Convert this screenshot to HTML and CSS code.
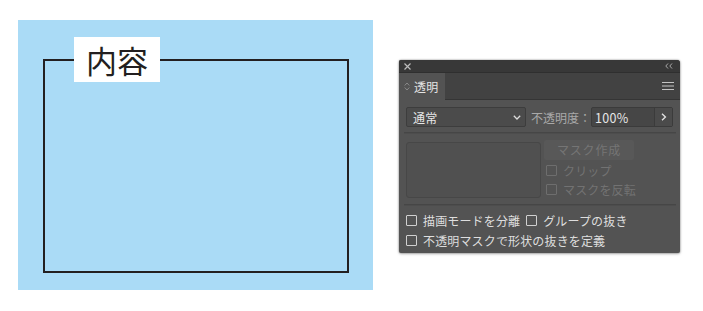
FILE: index.html
```html
<!DOCTYPE html>
<html lang="ja">
<head>
<meta charset="utf-8">
<link rel="stylesheet" href="styles.css">
</head>
<body>
<div class="page">
  <div class="canvas">
    <div class="frame"></div>
    <div class="label">内容</div>
  </div>
  <div class="panel">
    <div class="titlebar">
      <svg class="close" width="7" height="7" viewBox="0 0 7 7"><path d="M0.5 0.5L6.5 6.5M6.5 0.5L0.5 6.5" stroke="#bdbdbd" stroke-width="1.2"/></svg>
      <svg class="collapse" width="8" height="6" viewBox="0 0 8 6"><path d="M3 0.5L0.8 3L3 5.5M7 0.5L4.8 3L7 5.5" stroke="#a8a8a8" stroke-width="1" fill="none"/></svg>
    </div>
    <div class="tabrow">
      <div class="tab">
        <svg class="updown" width="6" height="9" viewBox="0 0 6 9"><path d="M0.7 3.5L3 1L5.3 3.5M0.7 5.5L3 8L5.3 5.5" stroke="#8a8a8a" stroke-width="1" fill="none"/></svg>
        <span>透明</span>
      </div>
      <svg class="menu" width="12" height="8" viewBox="0 0 12 8"><path d="M0 0.5H12M0 4H12M0 7.5H12" stroke="#c4c4c4" stroke-width="1"/></svg>
    </div>
    <div class="body">
      <div class="row1">
        <div class="select">
          <span>通常</span>
          <svg width="8" height="5" viewBox="0 0 8 5"><path d="M0.8 0.8L4 4L7.2 0.8" stroke="#dcdcdc" stroke-width="1.3" fill="none"/></svg>
        </div>
        <span class="oplabel">不透明度：</span>
        <div class="opinput">
          <span class="val">100%</span>
          <span class="arrow"><svg width="6" height="8" viewBox="0 0 6 8"><path d="M1 0.8L4.4 4L1 7.2" stroke="#e0e0e0" stroke-width="1.4" fill="none"/></svg></span>
        </div>
      </div>
      <div class="sep"></div>
      <div class="maskarea">
        <div class="thumb"></div>
        <div class="maskcol">
          <div class="maskbtn">マスク作成</div>
          <label class="check dis"><span class="box"></span>クリップ</label>
          <label class="check dis"><span class="box"></span>マスクを反転</label>
        </div>
      </div>
      <div class="sep sep2"></div>
      <div class="opts">
        <div class="optrow">
          <label class="check"><span class="box"></span>描画モードを分離</label>
          <label class="check"><span class="box"></span>グループの抜き</label>
        </div>
        <div class="optrow">
          <label class="check"><span class="box"></span>不透明マスクで形状の抜きを定義</label>
        </div>
      </div>
    </div>
  </div>
</div>
</body>
</html>
```

FILE: styles.css
```css
html, body {
  margin: 0;
  padding: 0;
  background: #ffffff;
}
body {
  font-family: "Noto Sans CJK JP", "Noto Sans", sans-serif;
  width: 703px;
  height: 311px;
  overflow: hidden;
}
.page {
  display: flex;
  align-items: flex-start;
  padding: 20px 0 0 18px;
}
.canvas {
  position: relative;
  width: 355px;
  height: 270px;
  background: #aadbf6;
  box-sizing: border-box;
  padding: 39px 0 0 25px;
}
.frame {
  width: 306px;
  height: 214px;
  box-sizing: border-box;
  border: 2px solid #231f20;
}
.label {
  position: absolute;
  left: 56px;
  top: 17px;
  width: 86px;
  height: 45px;
  background: #ffffff;
  color: #231f20;
  font-size: 31px;
  line-height: 45px;
  text-align: center;
  font-weight: 400;
}
.panel {
  margin-left: 26px;
  margin-top: 40px;
  width: 281px;
  height: 193px;
  background: #535353;
  border-radius: 2px 3px 2px 2px;
  box-shadow: 0 0 2px rgba(0,0,0,0.45), 0 1px 3px rgba(0,0,0,0.25);
  overflow: hidden;
  color: #d6d6d6;
  font-size: 12px;
  letter-spacing: 0.15px;
}
.titlebar {
  height: 12px;
  background: #383838;
  display: flex;
  align-items: center;
  justify-content: space-between;
  padding: 0 7px 0 5px;
  border-bottom: 1px solid #2f2f2f;
}
.tabrow {
  height: 26px;
  background: #424242;
  display: flex;
  align-items: stretch;
  justify-content: space-between;
  border-bottom: 1px solid #353535;
}
.tab {
  width: 46px;
  background: #535353;
  display: flex;
  align-items: center;
  gap: 4px;
  padding-left: 5px;
  box-sizing: border-box;
  color: #e4e4e4;
  font-size: 12px;
  margin-bottom: -1px;
}
.menu {
  align-self: center;
  margin-right: 6px;
}
.body {
  padding: 7px 7px 0 7px;
}
.row1 {
  display: flex;
  align-items: center;
  height: 20px;
}
.select {
  width: 120px;
  height: 20px;
  box-sizing: border-box;
  border: 1px solid #3d3d3d;
  border-radius: 2px;
  background: #4b4b4b;
  display: flex;
  align-items: center;
  justify-content: space-between;
  padding: 0 4px 0 6px;
  color: #e6e6e6;
}
.oplabel {
  margin-left: 5px;
  color: #a9a9a9;
  letter-spacing: 0;
  width: 60px;
  white-space: nowrap;
}
.opinput {
  width: 82px;
  height: 20px;
  box-sizing: border-box;
  border: 1px solid #3b3b3b;
  border-radius: 2px;
  background: #464646;
  display: flex;
  align-items: stretch;
}
.val {
  flex: 1;
  display: flex;
  align-items: center;
  padding-left: 3px;
  color: #e6e6e6;
  font-size: 12.5px;
  letter-spacing: 0.3px;
}
.arrow {
  width: 17px;
  border-left: 1px solid #3b3b3b;
  display: flex;
  align-items: center;
  justify-content: center;
  background: #4b4b4b;
}
.sep {
  height: 1px;
  background: #464646;
  margin: 5px -3px 0 -2px;
  border-bottom: 1px solid #4d4d4d;
}
.maskarea {
  display: flex;
  gap: 3px;
  margin-top: 6px;
  height: 59px;
}
.thumb {
  width: 135px;
  height: 56px;
  box-sizing: border-box;
  margin-top: 2px;
  border: 1px solid #474747;
  border-radius: 3px;
  background: #505050;
}
.maskcol {
  display: flex;
  flex-direction: column;
}
.maskbtn {
  width: 90px;
  height: 20px;
  background: #585858;
  border-radius: 2px;
  color: #757575;
  text-align: center;
  line-height: 20px;
  letter-spacing: 0.8px;
}
.check {
  display: flex;
  align-items: center;
  gap: 6px;
  height: 20px;
  color: #dedede;
  white-space: nowrap;
}
.box {
  width: 11px;
  height: 11px;
  box-sizing: border-box;
  border: 1px solid #d0d0d0;
  border-radius: 1px;
}
.check.dis {
  color: #727272;
  margin-left: 2px;
  height: 20px;
}
.check.dis .box {
  border-color: #6e6e6e;
}
.maskcol .check.dis:first-of-type {
  margin-top: 1px;
}
.sep2 {
  margin-top: 5px;
}
.opts {
  margin-top: 4px;
}
.optrow {
  display: flex;
  gap: 6px;
  height: 20px;
  align-items: center;
}
```
